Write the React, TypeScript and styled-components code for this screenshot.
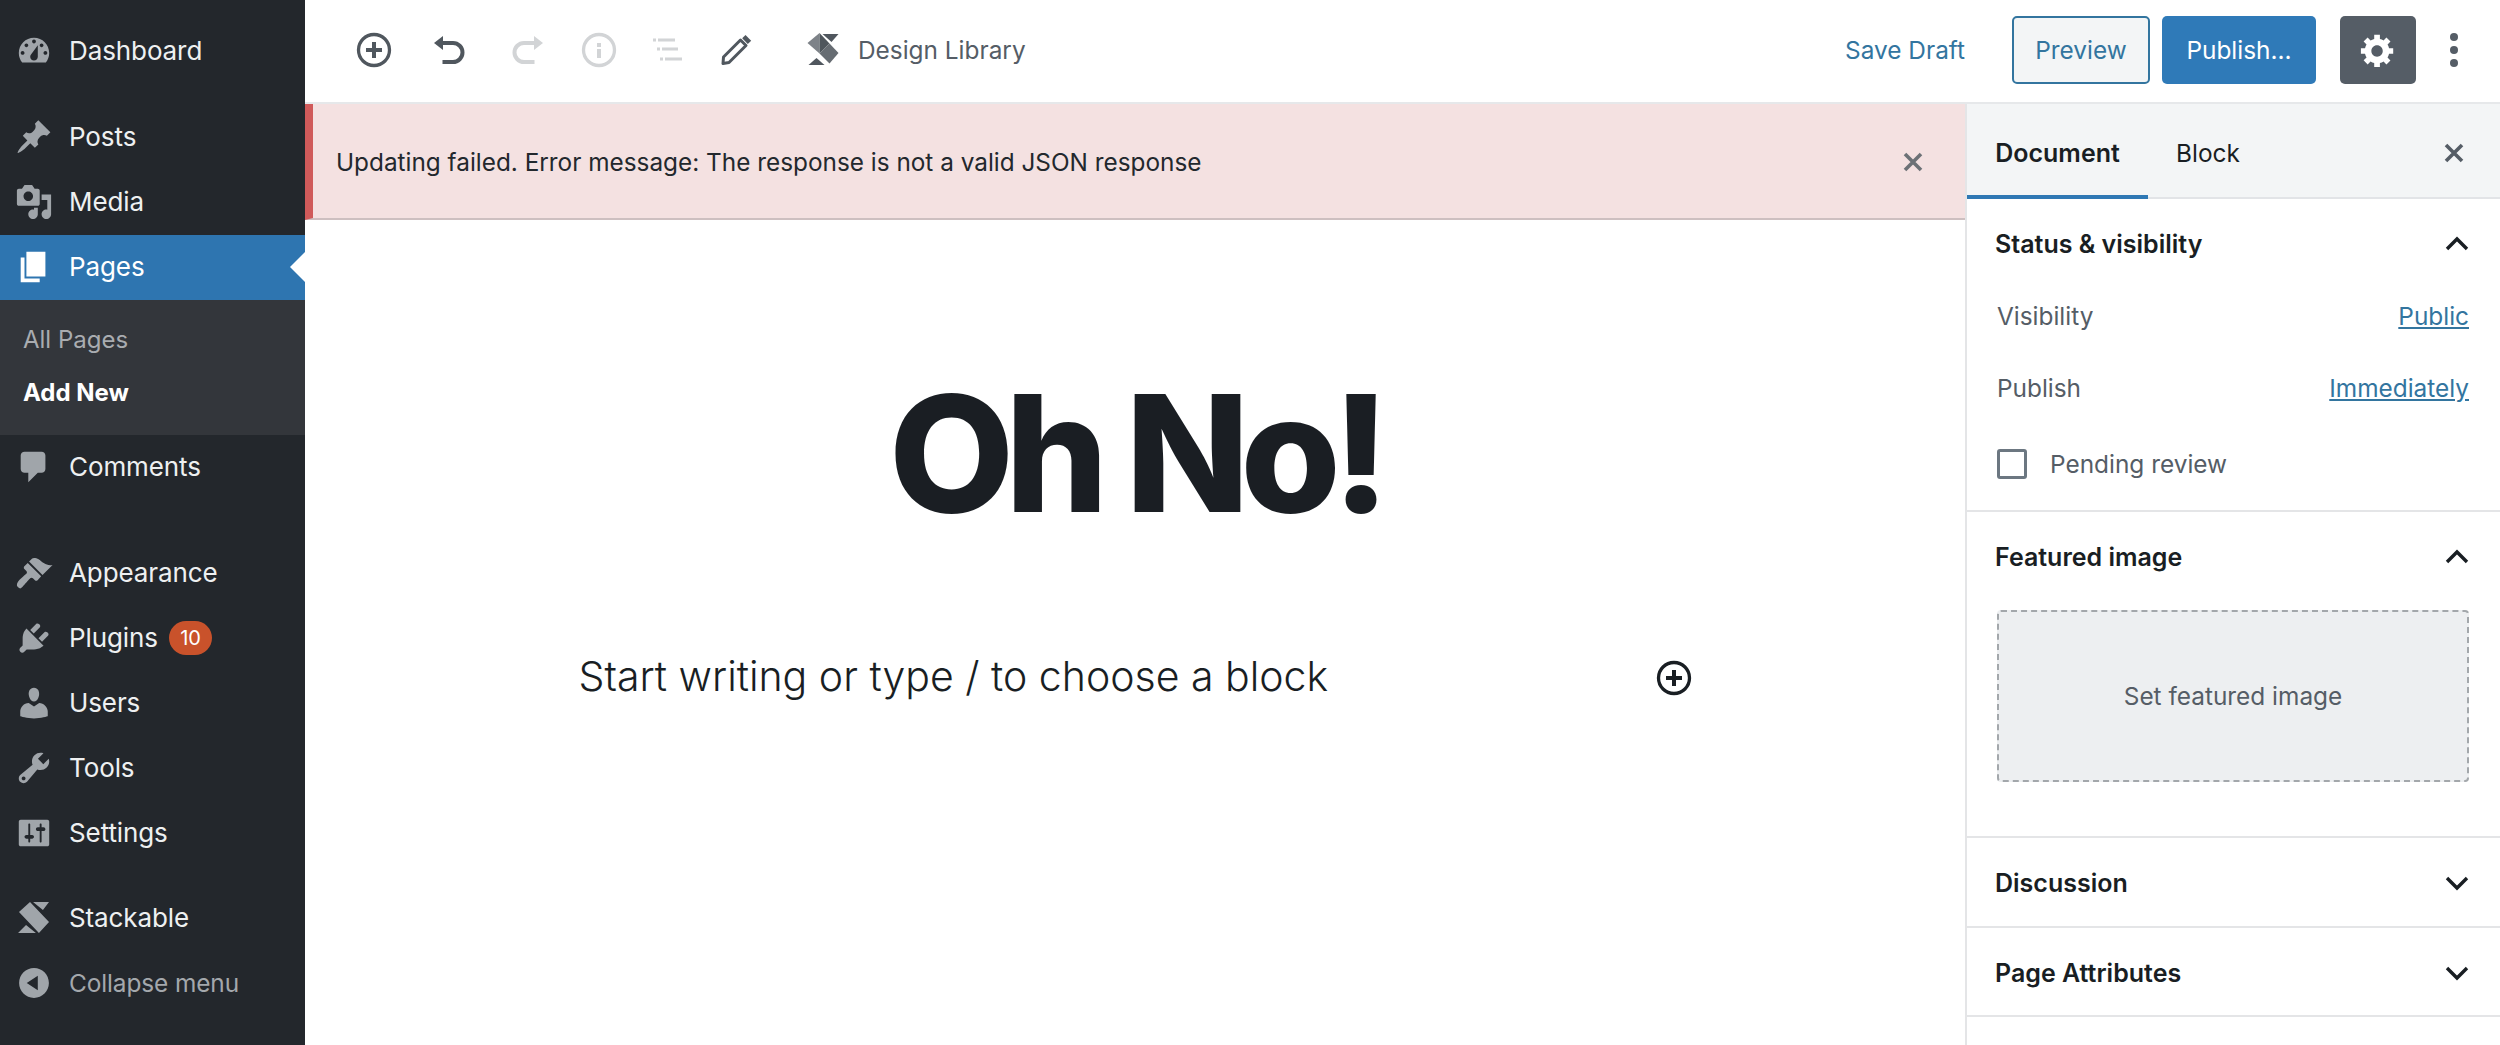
import React from "react";
import styled, { createGlobalStyle } from "styled-components";

const Global = createGlobalStyle`
  html, body { margin: 0; padding: 0; background: #fff; }
  * { box-sizing: border-box; }
  body { font-family: Inter, "Noto Sans", sans-serif; color: #191e23; }
`;
const Page = styled.div`display: flex; width: 2500px; height: 1045px; overflow: hidden; background: #fff;`;
const Menu = styled.nav`width: 305px; flex: none; background: #23272c; padding-top: 19px; display: flex; flex-direction: column;`;
const Row = styled.div<{ $active?: boolean; $dim?: boolean; $gap?: number }>`
  position: relative; height: 65px; display: flex; align-items: center; padding: 0 0 2px 15px; flex: none;
  margin-top: ${(p) => p.$gap ?? 0}px;
  font-size: ${(p) => (p.$dim ? "24.4px" : "26px")}; letter-spacing: -0.1px;
  color: ${(p) => (p.$active ? "#fff" : p.$dim ? "#a4a8ac" : "#eef0f1")};
  background: ${(p) => (p.$active ? "#2e75b0" : "transparent")};
  svg { width: 38px; height: 38px; fill: ${(p) => (p.$active ? "#fff" : "#a0a5aa")}; flex: none; margin-right: 16px; }
  ${(p) => p.$active && `&::after { content: ""; position: absolute; right: 0; top: 17px; border: 15px solid transparent; border-right-color: #fff; border-left-width: 0; }`}
`;
const Badge = styled.span`
  margin-left: 11px; height: 34px; min-width: 43px; border-radius: 17px; background: #c9522b; color: #fff;
  font-size: 20px; display: flex; align-items: center; justify-content: center;
`;
const Sub = styled.div`height: 135px; flex: none; background: #33363b; padding-top: 14px; display: flex; flex-direction: column;`;
const SubItem = styled.div<{ $on?: boolean }>`
  height: 53px; display: flex; align-items: center; padding: 0 0 2px 23px; font-size: 24px; flex: none;
  color: ${(p) => (p.$on ? "#fff" : "#a9acb0")}; font-weight: ${(p) => (p.$on ? 700 : 400)};
`;
const Main = styled.div`flex: 1; min-width: 0; display: flex; flex-direction: column;`;
const Bar = styled.header`height: 104px; flex: none; display: flex; align-items: center; padding: 0 0 2px 32px; border-bottom: 2px solid #e6e8ea;`;
const Tool = styled.span<{ $w: number; $off?: boolean; $flip?: boolean }>`
  width: ${(p) => p.$w}px; flex: none; display: flex; justify-content: center; color: ${(p) => (p.$off ? "#d2d4d6" : "#50575e")};
  svg { width: 36px; height: 36px; display: block; transform: ${(p) => (p.$flip ? "scaleX(-1)" : "none")}; }
`;
const LogoBox = styled.span`
  margin-left: 40px; margin-right: 16px; display: flex;
  svg { width: 36px; height: 36px; display: block; }
`;
const LibLabel = styled.span`font-size: 24.4px; color: #555d66;`;
const Right = styled.div`margin-left: auto; display: flex; align-items: center; height: 100%; padding: 0 8px 1px 0;`;
const Save = styled.span`font-size: 24.4px; color: #33759f; margin-right: 47px;`;
const Btn = styled.span<{ $w: number; $kind: "outline" | "primary" | "gear"; $ml?: number }>`
  width: ${(p) => p.$w}px; height: 68px; flex: none; border-radius: 5px; display: flex; align-items: center; justify-content: center;
  font-size: 24.4px; margin-left: ${(p) => p.$ml ?? 0}px;
  ${(p) => p.$kind === "outline" && "background:#f3f5f6;border:2px solid #33759f;color:#33759f;"}
  ${(p) => p.$kind === "primary" && "background:#2f7ab8;color:#fff;"}
  ${(p) => p.$kind === "gear" && "background:#555d66;color:#fff;"}
  svg { width: 38px; height: 38px; display: block; }
`;
const Dots = styled.span`
  width: 76px; flex: none; display: flex; flex-direction: column; align-items: center; gap: 5px;
  i { display: block; width: 8px; height: 8px; border-radius: 50%; background: #555d66; }
`;
const Body = styled.div`flex: 1; min-height: 0; display: flex;`;
const Editor = styled.div`flex: 1; min-width: 0; display: flex; flex-direction: column;`;
const Notice = styled.div`
  height: 116px; flex: none; display: flex; align-items: center; justify-content: space-between; background: #f4e1e1;
  border-left: 8px solid #d05a5a; border-bottom: 2px solid #cdbfc0; padding: 2px 40px 0 23px; font-size: 24.35px; color: #23282d;
  svg { width: 24px; height: 24px; color: #6c7176; }
`;
const Canvas = styled.div`flex: 1; display: flex; flex-direction: column; align-items: center; padding-top: 138px;`;
const Title = styled.h1`margin: 0; font-size: 162px; line-height: 190px; font-weight: 800; letter-spacing: -9px; color: #1a1e23;`;
const Para = styled.div`
  width: 1113px; margin-top: 103px; display: flex; align-items: center; justify-content: space-between;
  font-size: 41px; font-weight: 300; color: #191e23;
  svg { width: 36px; height: 36px; display: block; color: #191e23; margin-top: 4px; }
`;
const Panel = styled.aside`width: 535px; flex: none; border-left: 2px solid #e4e5e7; display: flex; flex-direction: column;`;
const Tabs = styled.div`height: 95px; flex: none; background: #f3f5f6; border-bottom: 2px solid #e2e4e7; display: flex; align-items: stretch; padding-right: 34px;`;
const Tab = styled.span<{ $on?: boolean; $w: number }>`
  width: ${(p) => p.$w}px; display: flex; align-items: center; justify-content: center; margin-bottom: -2px; padding-top: 6px;
  font-size: ${(p) => (p.$on ? "25px" : "24.4px")};
  font-weight: ${(p) => (p.$on ? 600 : 400)}; color: #191e23;
  border-bottom: 4px solid ${(p) => (p.$on ? "#2f78b4" : "transparent")};
`;
const TabClose = styled.span`
  margin-left: auto; display: flex; align-items: center; padding-top: 5px; color: #555d66;
  svg { width: 24px; height: 24px; }
`;
const Section = styled.section<{ $h: number }>`height: ${(p) => p.$h}px; flex: none; border-bottom: 2px solid #e4e5e7; padding: 0 31px 0 28px;`;
const Head = styled.div`height: 90px; display: flex; align-items: center; justify-content: space-between; font-size: 25px; font-weight: 600; color: #191e23;
  svg { width: 28px; height: 28px; color: #191e23; margin-right: -2px; }
`;
const Lines = styled.div`margin-top: -9px;`;
const Line = styled.div`height: 72px; display: flex; align-items: center; justify-content: space-between; font-size: 24.4px; color: #555d66; padding-left: 2px;`;
const Lnk = styled.span`color: #33759f; text-decoration: underline;`;
const Check = styled.label`display: flex; align-items: center; height: 46px; margin-top: 17px; padding-left: 2px; font-size: 24.4px; color: #555d66; gap: 23px;`;
const Box = styled.span`width: 30px; height: 30px; border: 3px solid #6c7781; border-radius: 3px; flex: none;`;
const Drop = styled.div`height: 172px; margin: 8px 0 0 2px; background: #edeff1; border: 2px dashed #a3a7ab; border-radius: 4px; display: flex; align-items: center; justify-content: center; font-size: 24.4px; color: #555d66;`;

const P = ({ d }: { d: string }) => <svg viewBox="0 0 20 20"><path d={d} fillRule="evenodd" /></svg>;
const Inserter = () => (
  <svg viewBox="0 0 36 36" fill="none" stroke="currentColor" strokeWidth="3.3"><circle cx="18" cy="18" r="15.5" /><path d="M18 10v16M10 18h16" strokeWidth="4" /></svg>
);
const Undo = () => (
  <svg viewBox="0 0 36 36" fill="none" stroke="currentColor" strokeWidth="4">
    <path d="M10 11h12a9.500 9.500 0 0 1 0 19H11.500" /><path d="M3 11l9-7v14z" fill="currentColor" stroke="none" />
  </svg>
);
const Info = () => (
  <svg viewBox="0 0 36 36" fill="none" stroke="currentColor" strokeWidth="3.3"><circle cx="18" cy="18" r="15.5" /><path d="M18 17v9M18 11v4" strokeWidth="4" /></svg>
);
const ListIc = () => (
  <svg viewBox="0 0 36 36" fill="none" stroke="currentColor" strokeWidth="3"><path d="M3 8h3M8 8h17M7 17h3M12 17h16M10 27h3M15 27h17" /></svg>
);
const Pencil = () => (
  <svg viewBox="0 0 36 36"><path d="M21.500 8L27 13.500 10 30.500l-6 1 .5-6.500z" fill="none" stroke="currentColor" strokeWidth="3" strokeLinejoin="round" /><path d="M26.500 3l5.700 5.700-3.400 3.300-5.600-5.700z" fill="currentColor" /></svg>
);
const Cross = () => (
  <svg viewBox="0 0 24 24" fill="none" stroke="currentColor" strokeWidth="3.6"><path d="M4 4l16 16M20 4L4 20" /></svg>
);
const Chevron = ({ up }: { up?: boolean }) => (
  <svg viewBox="0 0 28 28" fill="none" stroke="currentColor" strokeWidth="3.4"><path d={up ? "M4 19l10-10 10 10" : "M4 9l10 10 10-10"} /></svg>
);
const Gear = () => (
  <svg viewBox="0 0 20 20" fill="currentColor"><path fillRule="evenodd" d="M18 12h-2.180c-.170.7-.440 1.350-.810 1.930l1.540 1.540-2.100 2.100-1.540-1.540c-.580.360-1.230.630-1.910.790V19H8v-2.180c-.680-.160-1.330-.430-1.910-.790l-1.540 1.540-2.120-2.120 1.540-1.540c-.360-.580-.630-1.230-.790-1.910H1V9.030h2.170c.160-.7.440-1.350.8-1.940L2.430 5.550l2.100-2.100 1.540 1.540c.580-.370 1.240-.640 1.930-.810V2h3v2.180c.680.160 1.330.430 1.910.790l1.540-1.540 2.120 2.120-1.540 1.540c.360.590.640 1.240.8 1.940H18V12zm-8.500 1.500c1.660 0 3-1.340 3-3s-1.340-3-3-3-3 1.340-3 3 1.340 3 3 3z" /></svg>
);
const Logo = () => (
  <svg viewBox="0 0 36 36">
    <path d="M16.500 2h16l-7 8z" fill="#50575e" />
    <path d="M2.500 33h16l-8-7z" fill="#50575e" />
    <path d="M1.500 11L13.500 1v20.500z" fill="#7d8288" />
    <path d="M13.500 1L23.500 11.500 13.500 21.500z" fill="#4f565c" />
    <path d="M13.500 21.500L23.500 11.500 32.500 21 23.500 31.500z" fill="#666c72" />
  </svg>
);

const icons = {
  dashboard: "M3.76 16h12.48c1.1-1.37 1.76-3.11 1.76-5 0-4.42-3.58-8-8-8s-8 3.58-8 8c0 1.89.66 3.63 1.76 5zM10 4c.55 0 1 .45 1 1s-.45 1-1 1-1-.45-1-1 .45-1 1-1zM6 6c.55 0 1 .45 1 1s-.45 1-1 1-1-.45-1-1 .45-1 1-1zm8 0c.55 0 1 .45 1 1s-.45 1-1 1-1-.45-1-1 .45-1 1-1zm-5.370 5.550L12 7v6c0 1.100-.9 2-2 2s-2-.9-2-2c0-.570.240-1.080.630-1.450zM4 10c.55 0 1 .45 1 1s-.45 1-1 1-1-.45-1-1 .45-1 1-1zm12 0c.55 0 1 .45 1 1s-.45 1-1 1-1-.45-1-1 .45-1 1-1z",
  post: "M10.440 3.020l1.820-1.820 6.360 6.350-1.830 1.820c-1.050-.680-2.480-.570-3.410.360l-.750.750c-.920.930-1.040 2.350-.350 3.410l-1.830 1.820-2.410-2.410-2.800 2.790c-.420.420-3.380 2.710-3.800 2.290s1.860-3.390 2.280-3.810l2.790-2.790L4.100 9.360l1.830-1.820c1.050.690 2.480.570 3.400-.360l.750-.750c.930-.920 1.050-2.350.360-3.410z",
  media: "M13 11V4c0-.550-.450-1-1-1h-1.670L9 1H5L3.670 3H2c-.550 0-1 .450-1 1v7c0 .550.450 1 1 1h10c.550 0 1-.450 1-1zM7 4.500c1.380 0 2.500 1.120 2.500 2.500S8.380 9.500 7 9.500 4.500 8.380 4.500 7 5.620 4.500 7 4.500zM14 6h5v10.500c0 1.380-1.120 2.500-2.500 2.500S14 17.880 14 16.500s1.120-2.500 2.500-2.500c.170 0 .340.020.500.050V9h-3V6zm-4 8.050V13h2v3.500c0 1.380-1.120 2.500-2.500 2.500S7 17.880 7 16.500 8.120 14 9.500 14c.170 0 .340.020.500.050z",
  page: "M6 15V2h10v13H6zm-1 1h8v2H3V5h2v11z",
  comments: "M5 2h9c1.100 0 2 .9 2 2v7c0 1.100-.9 2-2 2h-2l-5 5v-5H5c-1.100 0-2-.9-2-2V4c0-1.100.9-2 2-2z",
  appearance: "M14.480 11.060L7.410 3.990l1.500-1.500c.5-.560 2.300-.470 3.510.320 1.210.8 1.430 1.280 2.910 2.100 1.180.640 2.450 1.260 4.450.850zm-.710.710L6.700 4.700 4.930 6.470c-.390.390-.390 1.020 0 1.410l1.060 1.060c.390.390.390 1.030 0 1.420-.6.6-6.590 4.870-4.590 6.870 1.500 1.500 1.830.9 3.110-.6 1.100-1.300 3.130-3.540 3.490-3.900.390-.390 1.030-.390 1.420 0l1.060 1.060c.390.390 1.020.390 1.410 0z",
  plugin: "M13.110 4.360L9.870 7.600 8 5.730l3.240-3.240c.350-.340 1.050-.2 1.560.320.520.510.660 1.210.310 1.550zm-8 1.770l.910-1.120 9.010 9.010-1.190.840c-.710.710-2.630 1.160-3.820 1.160H6.140L4.900 17.260c-.590.590-1.540.590-2.120 0-.590-.580-.590-1.530 0-2.120l1.240-1.240v-3.880c0-1.130.4-3.190 1.090-3.890zm7.260 3.970l3.240-3.240c.340-.350 1.040-.210 1.550.310.520.510.660 1.210.310 1.550l-3.240 3.250z",
  users: "M10 9.250c-2.270 0-2.730-3.440-2.730-3.440C7 4.020 7.820 2 9.970 2c2.160 0 2.980 2.020 2.710 3.810 0 0-.410 3.440-2.680 3.440zm0 2.570L12.720 10c2.390 0 4.520 2.330 4.520 4.530v2.490s-3.650 1.130-7.240 1.130c-3.650 0-7.240-1.130-7.240-1.130v-2.490c0-2.250 1.940-4.480 4.470-4.480z",
  tools: "M16.680 9.770c-1.340 1.340-3.300 1.670-4.950.990l-5.410 6.520c-.990.990-2.590.990-3.580 0s-.990-2.590 0-3.570l6.520-5.420c-.680-1.650-.350-3.610.990-4.950 1.280-1.280 3.120-1.620 4.720-1.060l-2.890 2.890 2.820 2.820 2.860-2.870c.530 1.580.180 3.390-1.080 4.650zM3.810 16.210c.4.390 1.040.390 1.430 0 .4-.4.4-1.040 0-1.430-.390-.4-1.030-.4-1.430 0-.390.390-.390 1.030 0 1.430z",
  settings: "M18 16V4c0-.550-.450-1-1-1H3c-.550 0-1 .450-1 1v12c0 .550.450 1 1 1h14c.550 0 1-.450 1-1zM8 11h1c.550 0 1 .450 1 1s-.450 1-1 1H8v1.500c0 .280-.220.500-.5.500s-.5-.220-.5-.5V13H6c-.550 0-1-.450-1-1s.450-1 1-1h1V5.500c0-.280.220-.5.5-.5s.5.220.5.5V11zm5-2h-1c-.550 0-1-.450-1-1s.450-1 1-1h1V5.500c0-.280.220-.5.5-.5s.5.220.5.5V7h1c.550 0 1 .450 1 1s-.450 1-1 1h-1v5.500c0 .280-.220.500-.5.500s-.5-.220-.5-.5V9z",
  stack: "M2.100 6.800L7.900 1.600l10 10.500-5.300 5.800zM9.500 1.600h8.400l-3.200 4.200zM1.600 17.900H11l-5.200-4.200z",
  collapse: "M10 2.160c4.330 0 7.840 3.510 7.840 7.840s-3.510 7.840-7.840 7.840S2.160 14.330 2.160 10 5.710 2.160 10 2.160zm2 11.720V6.120L6.180 9.970z",
};

export default function App() {
  return (
    <Page>
      <Global />
      <Menu>
        <Row><P d={icons.dashboard} />Dashboard</Row>
        <Row $gap={21}><P d={icons.post} />Posts</Row>
        <Row><P d={icons.media} />Media</Row>
        <Row $active><P d={icons.page} />Pages</Row>
        <Sub><SubItem>All Pages</SubItem><SubItem $on>Add New</SubItem></Sub>
        <Row><P d={icons.comments} />Comments</Row>
        <Row $gap={41}><P d={icons.appearance} />Appearance</Row>
        <Row><P d={icons.plugin} />Plugins<Badge>10</Badge></Row>
        <Row><P d={icons.users} />Users</Row>
        <Row><P d={icons.tools} />Tools</Row>
        <Row><P d={icons.settings} />Settings</Row>
        <Row $gap={20}><P d={icons.stack} />Stackable</Row>
        <Row $dim><P d={icons.collapse} />Collapse menu</Row>
      </Menu>
      <Main>
        <Bar>
          <Tool $w={74}><Inserter /></Tool>
          <Tool $w={76}><Undo /></Tool>
          <Tool $w={82} $off $flip><Undo /></Tool>
          <Tool $w={60} $off><Info /></Tool>
          <Tool $w={78} $off><ListIc /></Tool>
          <Tool $w={59}><Pencil /></Tool>
          <LogoBox><Logo /></LogoBox>
          <LibLabel>Design Library</LibLabel>
          <Right>
            <Save>Save Draft</Save>
            <Btn $w={138} $kind="outline">Preview</Btn>
            <Btn $w={154} $kind="primary" $ml={12}>Publish...</Btn>
            <Btn $w={76} $kind="gear" $ml={24}><Gear /></Btn>
            <Dots><i /><i /><i /></Dots>
          </Right>
        </Bar>
        <Body>
          <Editor>
            <Notice>Updating failed. Error message: The response is not a valid JSON response<Cross /></Notice>
            <Canvas>
              <Title>Oh No!</Title>
              <Para>Start writing or type / to choose a block<Inserter /></Para>
            </Canvas>
          </Editor>
          <Panel>
            <Tabs>
              <Tab $on $w={181}>Document</Tab>
              <Tab $w={120}>Block</Tab>
              <TabClose><Cross /></TabClose>
            </Tabs>
            <Section $h={313}>
              <Head>Status &amp; visibility<Chevron up /></Head>
              <Lines>
                <Line>Visibility<Lnk>Public</Lnk></Line>
                <Line>Publish<Lnk>Immediately</Lnk></Line>
              </Lines>
              <Check><Box />Pending review</Check>
            </Section>
            <Section $h={326}>
              <Head>Featured image<Chevron up /></Head>
              <Drop>Set featured image</Drop>
            </Section>
            <Section $h={90}><Head>Discussion<Chevron /></Head></Section>
            <Section $h={89}><Head>Page Attributes<Chevron /></Head></Section>
          </Panel>
        </Body>
      </Main>
    </Page>
  );
}
